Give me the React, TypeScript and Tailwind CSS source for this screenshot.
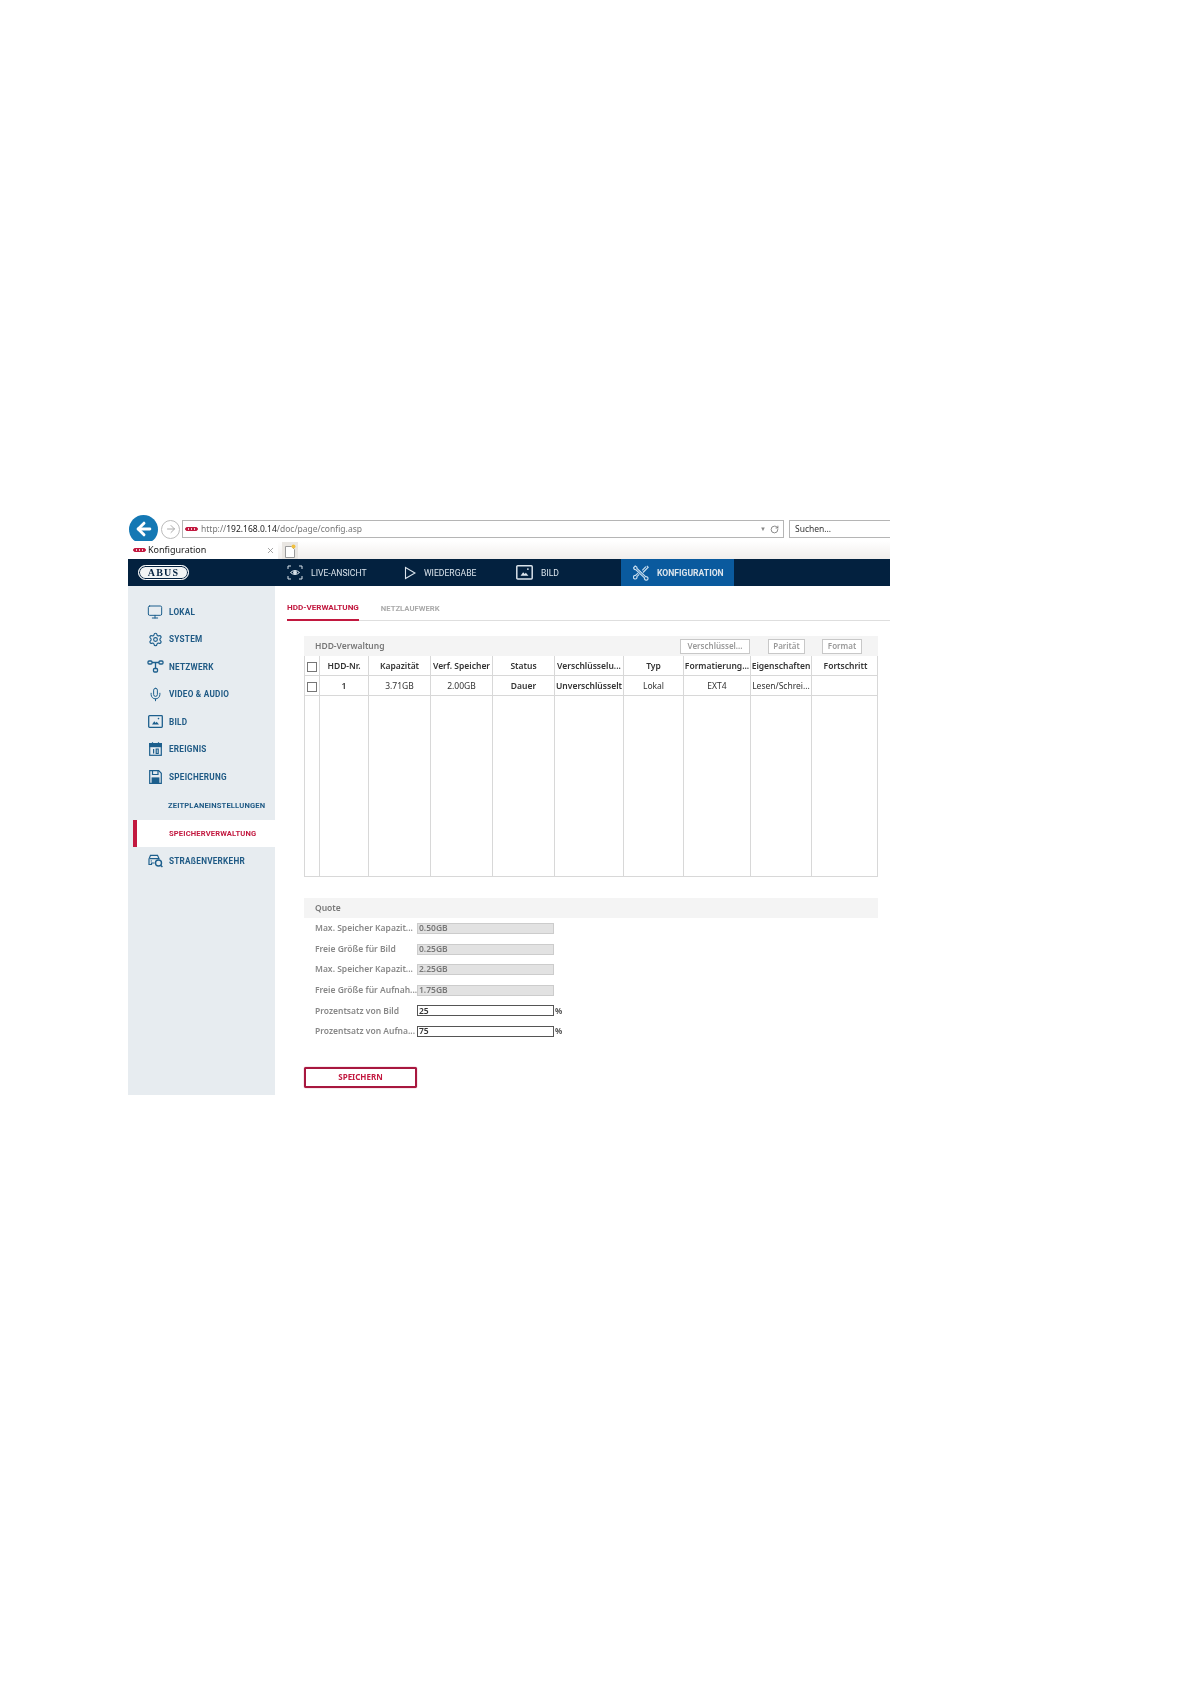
import type { ReactNode } from "react";
import { ArrowLeft, ArrowRight, Mic, Monitor, RotateCw, Settings, X } from "lucide-react";

const font = "font-['Noto_Sans','Liberation_Sans',sans-serif]";
const navy = "#1d5f8d";

const columns = [15, 49, 62, 62, 62, 69, 60, 67, 61, 67];

const headers = ["HDD-Nr.", "Kapazität", "Verf. Speicher", "Status", "Verschlüsselu...", "Typ", "Formatierung...", "Eigenschaften", "Fortschritt"];
const row = ["1", "3.71GB", "2.00GB", "Dauer", "Unverschlüsselt", "Lokal", "EXT4", "Lesen/Schrei...", ""];

const quota = [
  { label: "Max. Speicher Kapazit...", value: "0.50GB" },
  { label: "Freie Größe für Bild", value: "0.25GB" },
  { label: "Max. Speicher Kapazit...", value: "2.25GB" },
  { label: "Freie Größe für Aufnah...", value: "1.75GB" },
  { label: "Prozentsatz von Bild", value: "25", editable: true },
  { label: "Prozentsatz von Aufna...", value: "75", editable: true },
];

function AbusMark({ className }: { className: string }) {
  return <span className={`inline-block rounded-[2px] border border-[#c2183f] bg-[repeating-linear-gradient(90deg,#c2183f_0_2px,#f3c6d0_2px_3px)] ${className}`} />;
}

function NetworkIcon() {
  return (
    <svg width="17" height="13" viewBox="0 0 17 13" fill="none" stroke={navy} strokeWidth="1.3">
      <rect x="1" y="1" width="4" height="3" rx="1" />
      <rect x="12" y="1" width="4" height="3" rx="1" />
      <rect x="6.5" y="8.5" width="4" height="3.5" rx="1" />
      <path d="M5 2.5h7M8.5 2.5v6" />
    </svg>
  );
}

function PictureIcon({ color = navy, size = 15 }: { color?: string; size?: number }) {
  return (
    <svg width={size} height={(size * 13) / 15} viewBox="0 0 15 13" fill="none" stroke={color} strokeWidth="1.3">
      <rect x="0.7" y="0.7" width="13.6" height="11.6" rx="0.8" />
      <path d="M4 9.5l2.3-3.2 1.4 1.6 1-1.1 2.3 2.7z" fill={color} stroke="none" />
      <circle cx="10.5" cy="3.6" r="0.8" fill={color} stroke="none" />
    </svg>
  );
}

function CalendarIcon() {
  return (
    <svg width="13" height="14" viewBox="0 0 13 14" fill="none" stroke={navy} strokeWidth="1.2">
      <rect x="0.7" y="1.6" width="11.6" height="11.7" />
      <rect x="0.7" y="1.6" width="11.6" height="3" fill={navy} />
      <path d="M3.5 0.3v2M9.5 0.3v2M4.6 7v4.5M7.2 7h2v4.5h-2z" />
    </svg>
  );
}

function FloppyIcon() {
  return (
    <svg width="13" height="14" viewBox="0 0 13 14" fill="none" stroke={navy} strokeWidth="1.2">
      <path d="M0.7 0.7h9l2.6 2.6v10H0.7z" />
      <path d="M3.5 0.7v3.8h5.5V0.7" />
      <rect x="2.6" y="7.4" width="7.8" height="5.9" fill={navy} stroke="none" />
    </svg>
  );
}

function TrafficIcon() {
  return (
    <svg width="15" height="14" viewBox="0 0 15 14" fill="none" stroke={navy} strokeWidth="1.2">
      <path d="M1 8V5l1.5-3.7h7L11 4.6H2M1 8v2.5h2.5V9h3" />
      <circle cx="3.3" cy="6.9" r="0.7" fill={navy} stroke="none" />
      <circle cx="10.5" cy="9" r="3" strokeWidth="1.4" />
      <path d="M12.6 11.2l1.8 1.9" strokeWidth="1.4" />
    </svg>
  );
}

function ToolsIcon() {
  return (
    <svg width="16" height="16" viewBox="0 0 16 16" fill="none" stroke="#c5dcee" strokeWidth="1.2">
      <path d="M2.2 1l1.6 1 .2 1.4 8.6 8.2c1.2-.3 2.4.6 2.4 1.8s-1 1.9-2 1.8c-1.1-.1-1.8-1.2-1.5-2.3L2.9 4.7 1.4 4.4.5 2.9z" />
      <path d="M13.8 .8l1.4 1.4-5.2 5.3M6.2 9.3l-2.3 2.3c.3 1.1-.4 2.2-1.5 2.4-1.1.1-2-.7-2-1.8 0-1.2 1-2 2.2-1.8l2.4-2.3M9.3 5.3l3.6-3.6" />
    </svg>
  );
}

function SideItem({ icon, label, active, indent }: { icon?: ReactNode; label: string; active?: boolean; indent?: boolean }) {
  const sub = active || indent;
  return (
    <div
      className={`flex h-[27.5px] items-center ${active ? "ml-[5px] border-l-4 border-[#c2183f] bg-white pl-[32px] text-[#c2183f]" : "pl-[17px] text-[#1f5a85]"}`}
    >
      {!sub && <span className="flex w-[20px] justify-center">{icon}</span>}
      <span className={`${indent ? "pl-[23px]" : active ? "" : "pl-[4px]"} font-['Roboto',sans-serif] ${sub ? "text-[7.6px] tracking-[0.15px]" : "text-[8.2px] tracking-[0.25px]"} font-bold whitespace-nowrap`}>{label}</span>
    </div>
  );
}

function TopTab({ icon, label, width, active }: { icon: ReactNode; label: string; width: string; active?: boolean }) {
  return (
    <div className={`flex h-full items-center gap-[8px] ${width} ${active ? "bg-[#0a5a9e] pl-[12px] font-bold" : ""}`}>
      {icon}
      <span className="pt-[1px] font-['Roboto',sans-serif] text-[8.6px] whitespace-nowrap">{label}</span>
    </div>
  );
}

function TableRow({ cells, bold, height }: { cells: string[]; bold?: boolean; height: string }) {
  return (
    <div className={`flex ${height} border-b border-[#d8d8d8]`}>
      <div className="flex w-[15px] shrink-0 items-center justify-center border-r border-[#d8d8d8] pt-[3px]">
        <span className="block size-[10px] border border-[#777] bg-white" />
      </div>
      {cells.map((cell, i) => (
        <div
          key={i}
          style={{ width: columns[i + 1] }}
          className={`flex shrink-0 items-center justify-center overflow-hidden border-r border-[#d8d8d8] pt-[2px] text-[8.5px] whitespace-nowrap text-[#333] last:border-r-0 ${bold || i === 3 || i === 4 || i === 0 ? "font-semibold" : ""}`}
        >
          {cell}
        </div>
      ))}
    </div>
  );
}

function ActionButton({ label, width }: { label: string; width: string }) {
  return <div className={`flex h-[15px] items-center justify-center border border-[#c8c8c8] bg-white text-[8px] text-[#999] ${width}`}>{label}</div>;
}

export default function App() {
  return (
    <div className={`min-h-[1684px] bg-white pt-[515px] pl-[128px] ${font}`}>
      <div className="w-[762px] blur-[0.35px]">
        {/* browser chrome */}
        <div className="flex h-[26px] items-center pt-[2px]">
          <div className="ml-[1px] flex size-[29px] items-center justify-center rounded-full bg-[#1478b4]">
            <ArrowLeft size={20} strokeWidth={3.5} className="text-white" />
          </div>
          <div className="ml-[3px] flex size-[19px] items-center justify-center rounded-full border border-[#bbb]">
            <ArrowRight size={12} className="text-[#aaa]" />
          </div>
          <div className="ml-[2px] flex h-[18px] w-[602px] items-center border border-[#b5b5b5] pl-[2px] text-[8.5px] text-[#777]">
            <AbusMark className="mr-[3px] h-[4px] w-[13px]" />
            <span>http://</span>
            <span className="text-[#222]">192.168.0.14</span>
            <span>/doc/page/config.asp</span>
            <span className="mr-[4px] ml-auto text-[6px] text-[#888]">▼</span>
            <RotateCw size={9} className="mr-[4px] text-[#666]" />
          </div>
          <div className="ml-[5px] flex h-[18px] flex-1 items-center border-y border-l border-[#b5b5b5] pl-[5px] text-[8.5px] text-[#333]">Suchen...</div>
        </div>
        <div className="flex h-[18px] items-end bg-[linear-gradient(#ffffff,#f1eeec)]">
          <div className="flex h-[18px] w-[150px] items-center bg-white pl-[5px] text-[9px] text-[#222]">
            <AbusMark className="mr-[2px] h-[4px] w-[13px]" />
            Konfiguration
            <X size={9} className="mr-[3px] ml-auto text-[#888]" />
          </div>
          <div className="ml-[4px] flex h-[17px] w-[16px] items-center justify-center bg-[#e9e6e2]">
            <svg width="12" height="14" viewBox="0 0 12 14" fill="#fff" stroke="#999">
              <path d="M1.5 2.5h6l3 3v8h-9z" />
              <circle cx="9.5" cy="2.5" r="2" fill="#f0c040" stroke="none" />
            </svg>
          </div>
        </div>

        {/* top navigation */}
        <div className="flex h-[27px] items-center bg-[#03213f] text-[#dbe4ec]">
          <div className="ml-[10px] flex h-[15px] w-[51px] items-center justify-center rounded-full border border-white bg-[#f2f4f5] font-['Liberation_Serif',serif] text-[10px] leading-none font-bold tracking-[1.2px] text-[#03213f] shadow-[inset_0_0_0_1px_#03213f]">ABUS</div>
          <div className="ml-[98px] flex h-full">
            <TopTab width="w-[117px]" label="LIVE-ANSICHT" icon={
              <svg width="16" height="15" viewBox="0 0 16 15" fill="none" stroke="currentColor">
                <path d="M1 4V1h3M12 1h3v3M15 11v3h-3M4 14H1v-3" />
                <path d="M3.5 7.5q4.5-4 9 0q-4.5 4-9 0z" />
                <circle cx="8" cy="7.5" r="1.5" fill="currentColor" />
              </svg>
            } />
            <TopTab width="w-[112px]" label="WIEDERGABE" icon={
              <svg width="12" height="14" viewBox="0 0 12 14" fill="none" stroke="currentColor" strokeWidth="1.1">
                <path d="M1.5 1.5v11l9.5-5.5z" />
              </svg>
            } />
            <TopTab width="w-[105px]" label="BILD" icon={<PictureIcon color="#dbe4ec" size={17} />} />
            <TopTab active width="w-[113px]" label="KONFIGURATION" icon={<ToolsIcon />} />
          </div>
        </div>

        <div className="flex">
          {/* sidebar */}
          <div className="h-[509px] w-[147px] shrink-0 bg-[#e7ecf0] pt-[12px]">
            <SideItem label="LOKAL" icon={<Monitor size={16} strokeWidth={1.5} color={navy} />} />
            <SideItem label="SYSTEM" icon={<Settings size={15} strokeWidth={1.8} color={navy} />} />
            <SideItem label="NETZWERK" icon={<NetworkIcon />} />
            <SideItem label="VIDEO & AUDIO" icon={<Mic size={15} strokeWidth={1.6} color={navy} />} />
            <SideItem label="BILD" icon={<PictureIcon />} />
            <SideItem label="EREIGNIS" icon={<CalendarIcon />} />
            <SideItem label="SPEICHERUNG" icon={<FloppyIcon />} />
            <div className="h-[1.5px]" />
            <SideItem indent label="ZEITPLANEINSTELLUNGEN" />
            <SideItem active label="SPEICHERVERWALTUNG" />
            <SideItem label="STRAßENVERKEHR" icon={<TrafficIcon />} />
          </div>

          {/* content */}
          <div className="min-w-0 flex-1 pl-[12px]">
            <div className="flex h-[35px] gap-[22px] border-b border-[#dedede]">
              <div className="flex h-[35px] items-center border-b-2 border-[#c2183f] pt-[10px] font-['Roboto',sans-serif] text-[8.1px] font-bold text-[#c2183f]">HDD-VERWALTUNG</div>
              <div className="flex h-[35px] items-center pt-[10px] font-['Roboto',sans-serif] text-[7.7px] font-bold text-[#aaa]">NETZLAUFWERK</div>
            </div>

            <div className="mt-[15px] ml-[17px] w-[574px]">
              <div className="flex h-[20px] items-center bg-[#f4f4f4] pr-[16px] pl-[11px] text-[8.5px] font-semibold text-[#777]">
                HDD-Verwaltung
                <div className="ml-auto flex">
                  <ActionButton label="Verschlüssel..." width="w-[70px]" />
                  <div className="w-[18px]" />
                  <ActionButton label="Parität" width="w-[37px]" />
                  <div className="w-[17px]" />
                  <ActionButton label="Format" width="w-[40px]" />
                </div>
              </div>
              <div className="h-[221px] border-x border-b border-[#d8d8d8]">
                <TableRow cells={headers} bold height="h-[20px]" />
                <TableRow cells={row} height="h-[20px]" />
                <div className="flex h-[180px]">
                  {columns.map((w, i) => (
                    <div key={i} style={{ width: w }} className="shrink-0 border-r border-[#d8d8d8] last:border-r-0" />
                  ))}
                </div>
              </div>

              <div className="mt-[21px] flex h-[20px] items-center bg-[#f4f4f4] pl-[11px] text-[8.5px] font-semibold text-[#777]">Quote</div>
              <div className="mt-[5px] flex flex-col gap-[9.6px]">
                {quota.map((item, i) => (
                  <div key={i} className="flex h-[11px] items-center">
                    <div className="w-[113px] shrink-0 pl-[11px] text-[8.5px] font-semibold whitespace-nowrap text-[#888]">{item.label}</div>
                    <div className={`flex h-[11px] w-[137px] items-center border pl-[1px] text-[8.5px] font-semibold ${item.editable ? "border-[#555] bg-white text-[#333]" : "border-[#ccc] bg-[#e2e2e2] text-[#777]"}`}>{item.value}</div>
                    {item.editable && <span className="ml-[1px] text-[8px] font-bold text-[#555]">%</span>}
                  </div>
                ))}
              </div>
              <div className="mt-[30px] flex h-[21px] w-[113px] items-center justify-center rounded-[2px] border-2 border-[#a8173f] bg-white text-[8px] font-bold text-[#c2183f] shadow-[0_0_1px_#a8173f]">SPEICHERN</div>
            </div>
          </div>
        </div>
      </div>
    </div>
  );
}
